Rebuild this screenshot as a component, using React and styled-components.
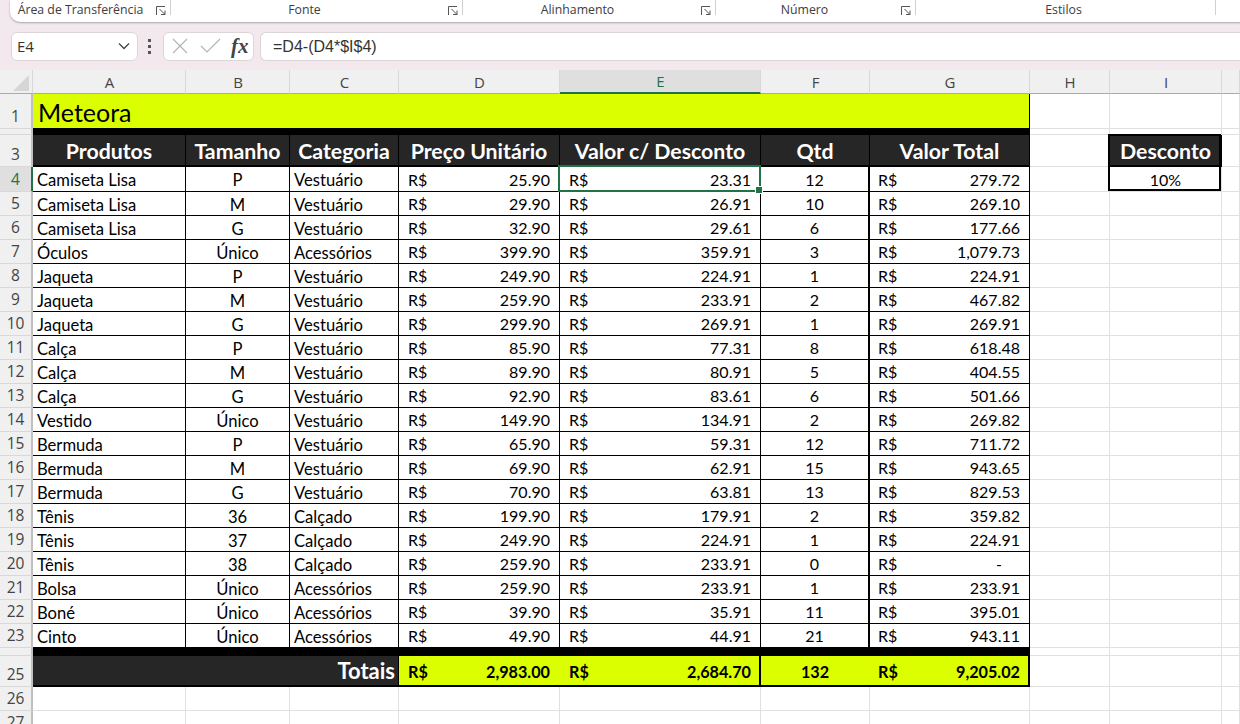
import styled, { createGlobalStyle } from "styled-components";

const COLUMNS = "33px 153px 104px 109px 161px 201px 109px 160px 80px 112px 1fr";
const LETTERS = ["A", "B", "C", "D", "E", "F", "G", "H", "I"];

const PRODUCTS = [
  [4, "Camiseta Lisa", "P", "Vestuário", "25.90", "23.31", "12", "279.72"],
  [5, "Camiseta Lisa", "M", "Vestuário", "29.90", "26.91", "10", "269.10"],
  [6, "Camiseta Lisa", "G", "Vestuário", "32.90", "29.61", "6", "177.66"],
  [7, "Óculos", "Único", "Acessórios", "399.90", "359.91", "3", "1,079.73"],
  [8, "Jaqueta", "P", "Vestuário", "249.90", "224.91", "1", "224.91"],
  [9, "Jaqueta", "M", "Vestuário", "259.90", "233.91", "2", "467.82"],
  [10, "Jaqueta", "G", "Vestuário", "299.90", "269.91", "1", "269.91"],
  [11, "Calça", "P", "Vestuário", "85.90", "77.31", "8", "618.48"],
  [12, "Calça", "M", "Vestuário", "89.90", "80.91", "5", "404.55"],
  [13, "Calça", "G", "Vestuário", "92.90", "83.61", "6", "501.66"],
  [14, "Vestido", "Único", "Vestuário", "149.90", "134.91", "2", "269.82"],
  [15, "Bermuda", "P", "Vestuário", "65.90", "59.31", "12", "711.72"],
  [16, "Bermuda", "M", "Vestuário", "69.90", "62.91", "15", "943.65"],
  [17, "Bermuda", "G", "Vestuário", "70.90", "63.81", "13", "829.53"],
  [18, "Tênis", "36", "Calçado", "199.90", "179.91", "2", "359.82"],
  [19, "Tênis", "37", "Calçado", "249.90", "224.91", "1", "224.91"],
  [20, "Tênis", "38", "Calçado", "259.90", "233.91", "0", "-"],
  [21, "Bolsa", "Único", "Acessórios", "259.90", "233.91", "1", "233.91"],
  [22, "Boné", "Único", "Acessórios", "39.90", "35.91", "11", "395.01"],
  [23, "Cinto", "Único", "Acessórios", "49.90", "44.91", "21", "943.11"],
];

const GROUPS = [
  { name: "Área de Transferência", width: 161, shift: 19, launcher: true },
  { name: "Fonte", width: 292, shift: 24, launcher: true },
  { name: "Alinhamento", width: 253, shift: 23, launcher: true },
  { name: "Número", width: 200, shift: 22, launcher: true },
  { name: "Estilos", width: 300, shift: 4 },
];

const Launcher = () => (
  <LauncherIcon viewBox="0 0 10 9">
    <path d="M.5 9V.5H9M3.5 3l5.5 5.5M9 4.5v4H5" fill="none" stroke="#555" />
  </LauncherIcon>
);

const Blank = ({ count = 1 }) =>
  Array.from({ length: count }, (_, i) => <GridCell key={i} />);

const Money = ({ value, $tight }) => (
  <MoneyCell $tight={$tight}>
    <span>R$</span>
    <span>{value}</span>
  </MoneyCell>
);

const App = () => {
  return (
    <Page>
      <GlobalStyle />
      <Ribbon>
        {GROUPS.map((group) => (
          <RibbonGroup key={group.name} $width={group.width} $shift={group.shift}>
            {group.name}
            {group.launcher && <Launcher />}
          </RibbonGroup>
        ))}
      </Ribbon>

      <FormulaBar>
        <NameBox>
          E4
          <svg width="12" height="8" viewBox="0 0 12 8">
            <path d="M1 1.5l5 5 5-5" fill="none" stroke="#444" strokeWidth="1.3" />
          </svg>
        </NameBox>
        <Dots>
          <i />
          <i />
          <i />
        </Dots>
        <FormulaButtons>
          <svg width="16" height="16" viewBox="0 0 16 16">
            <path d="M1 1l14 14M15 1L1 15" stroke="#b4b4b4" strokeWidth="1.2" />
          </svg>
          <svg width="21" height="16" viewBox="0 0 21 16">
            <path d="M1 8l6 6L20 1" fill="none" stroke="#b4b4b4" strokeWidth="1.2" />
          </svg>
          <FxLabel>fx</FxLabel>
        </FormulaButtons>
        <FormulaInput>=D4-(D4*$I$4)</FormulaInput>
      </FormulaBar>

      <Row $height={24}>
        <Corner>
          <svg width="16" height="16" viewBox="0 0 16 16">
            <path d="M16 0v16H0z" fill="#d6d6d6" />
          </svg>
        </Corner>
        {LETTERS.map((letter) => (
          <ColumnLabel key={letter} $active={letter === "E"}>
            {letter}
          </ColumnLabel>
        ))}
        <ColumnLabel />
      </Row>

      <Row $height={35}>
        <RowLabel>1</RowLabel>
        <TitleCell>Meteora</TitleCell>
        <Blank count={3} />
      </Row>

      <Row $height={6}>
        <RowLabel />
        <BlackBand />
        <Blank count={3} />
      </Row>

      <Row $height={32}>
        <RowLabel>3</RowLabel>
        <HeadCell>Produtos</HeadCell>
        <HeadCell>Tamanho</HeadCell>
        <HeadCell>Categoria</HeadCell>
        <HeadCell>Preço Unitário</HeadCell>
        <HeadCell>Valor c/ Desconto</HeadCell>
        <HeadCell>Qtd</HeadCell>
        <HeadCell>Valor Total</HeadCell>
        <GridCell />
        <DiscountHead>Desconto</DiscountHead>
        <GridCell />
      </Row>

      {PRODUCTS.map(([n, name, size, category, price, discounted, qty, total]) => (
        <Row key={n} $height={n === 4 ? 25 : 24}>
          <RowLabel $active={n === 4}>{n}</RowLabel>
          <TextCell>{name}</TextCell>
          <TextCell $center>{size}</TextCell>
          <TextCell>{category}</TextCell>
          <Money value={price} />
          {n === 4 ? (
            <SelectedCell>
              <span>R$</span>
              <span>{discounted}</span>
            </SelectedCell>
          ) : (
            <Money value={discounted} />
          )}
          <QtyCell>{qty}</QtyCell>
          {total === "-" ? (
            <MoneyCell $tight>
              <span>R$</span>
              <Dash>-</Dash>
            </MoneyCell>
          ) : (
            <Money value={total} $tight />
          )}
          <GridCell />
          {n === 4 ? <DiscountValue>10%</DiscountValue> : <GridCell />}
          <GridCell />
        </Row>
      ))}

      <Row $height={8}>
        <RowLabel />
        <BlackBand />
        <Blank count={3} />
      </Row>

      <Row $height={31}>
        <RowLabel>25</RowLabel>
        <TotalsLabel>Totais</TotalsLabel>
        <TotalMoney>
          <span>R$</span>
          <span>2,983.00</span>
        </TotalMoney>
        <TotalMoney $thick>
          <span>R$</span>
          <span>2,684.70</span>
        </TotalMoney>
        <TotalQty>132</TotalQty>
        <TotalMoney $last>
          <span>R$</span>
          <span>9,205.02</span>
        </TotalMoney>
        <Blank count={3} />
      </Row>

      {[26, 27].map((n) => (
        <Row key={n} $height={24}>
          <RowLabel>{n}</RowLabel>
          <Blank count={10} />
        </Row>
      ))}
    </Page>
  );
};

export default App;

const GlobalStyle = createGlobalStyle`
  html, body {
    margin: 0;
    padding: 0;
    background: #f3e8ed;
  }
  * {
    box-sizing: border-box;
  }
`;

const Page = styled.div`
  width: 1240px;
  height: 724px;
  overflow: hidden;
  background: #f3e8ed;
  font-family: "Lato", "Liberation Sans", sans-serif;
`;

const Ribbon = styled.div`
  display: flex;
  width: 1260px;
  height: 22px;
  margin-left: 10px;
  background: #fff;
  border-radius: 0 0 0 10px;
  box-shadow: 0 1px 2px rgba(0, 0, 0, 0.3);
  font-family: "Open Sans", sans-serif;
  font-size: 12.3px;
  color: #3d3d3d;
`;

const RibbonGroup = styled.div`
  position: relative;
  flex: none;
  display: flex;
  justify-content: center;
  width: ${({ $width }) => $width}px;
  height: 15px;
  padding-right: ${({ $shift }) => $shift}px;
  padding-top: 2px;
  line-height: 16px;
  white-space: nowrap;
  border-right: 1px solid #d0d0d0;
`;

const LauncherIcon = styled.svg`
  position: absolute;
  right: 4px;
  top: 6px;
  width: 10px;
  height: 9px;
`;

const FormulaBar = styled.div`
  display: flex;
  align-items: center;
  height: 48px;
  padding: 0 0 0 11px;
`;

const NameBox = styled.div`
  display: flex;
  align-items: center;
  justify-content: space-between;
  width: 127px;
  height: 29px;
  padding: 0 7px 0 5px;
  background: #fff;
  border: 1px solid #dcd6d9;
  border-radius: 6px;
  font-family: "Open Sans", sans-serif;
  font-size: 15px;
  color: #333;
`;

const Dots = styled.div`
  display: flex;
  flex-direction: column;
  gap: 3px;
  margin: 0 12px 0 10px;

  i {
    display: block;
    width: 3px;
    height: 3px;
    background: #555;
  }
`;

const FormulaButtons = styled.div`
  display: flex;
  flex: none;
  align-items: center;
  width: 91px;
  height: 29px;
  padding-left: 8px;
  gap: 12px;
  background: #fff;
  border: 1px solid #dcd6d9;
  border-radius: 6px;

  svg {
    flex: none;
  }
`;

const FxLabel = styled.span`
  margin-left: -2px;
  font-family: "Liberation Serif", serif;
  font-style: italic;
  font-weight: 700;
  font-size: 21px;
  line-height: 1;
  color: #444;
`;

const FormulaInput = styled.div`
  flex: 1;
  height: 29px;
  margin-left: 6px;
  padding-left: 12px;
  background: #fff;
  border: 1px solid #dcd6d9;
  border-right: 0;
  border-radius: 6px 0 0 6px;
  font-family: "Liberation Sans", sans-serif;
  font-size: 16px;
  line-height: 27px;
  color: #333;
`;

const Row = styled.div`
  display: grid;
  grid-template-columns: ${COLUMNS};
  height: ${({ $height }) => $height}px;
`;

const Corner = styled.div`
  display: flex;
  justify-content: flex-end;
  padding: 5px 3px 0 0;
  background: #f0f0f0;
  border-right: 1px solid #d8d8d8;
  border-bottom: 1px solid #ababab;
`;

const ColumnLabel = styled.div`
  display: flex;
  align-items: center;
  justify-content: center;
  padding-left: 1px;
  background: ${({ $active }) => ($active ? "#dfdfdf" : "#f0f0f0")};
  border-right: 1px solid #d8d8d8;
  border-bottom: ${({ $active }) =>
    $active ? "2px solid #217346" : "1px solid #ababab"};
  font-family: "Open Sans", sans-serif;
  font-size: 15px;
  color: ${({ $active }) => ($active ? "#217346" : "#444")};
`;

const RowLabel = styled.div`
  display: flex;
  align-items: flex-end;
  justify-content: center;
  padding-bottom: 1px;
  background: ${({ $active }) => ($active ? "#dfdfdf" : "#f0f0f0")};
  border-right: 2px solid ${({ $active }) => ($active ? "#217346" : "#c0c0c0")};
  border-bottom: 1px solid #d8d8d8;
  font-family: "Open Sans", sans-serif;
  font-size: 15.5px;
  line-height: 22px;
  overflow: hidden;
  color: ${({ $active }) => ($active ? "#217346" : "#444")};
`;

const GridCell = styled.div`
  background: #fff;
  border-right: 1px solid #e0e0e0;
  border-bottom: 1px solid #e0e0e0;
`;

const TitleCell = styled.div`
  grid-column: span 7;
  display: flex;
  align-items: center;
  padding: 2px 0 0 5px;
  background: #dcff00;
  border-bottom: 1px solid #000;
  border-right: 1px solid #000;
  font-size: 25px;
  color: #000;
`;

const BlackBand = styled.div`
  grid-column: span 7;
  background: #000;
`;

const HeadCell = styled.div`
  position: relative;
  display: flex;
  align-items: center;
  justify-content: center;
  padding-top: 2px;
  background: #262626;
  border-right: 1px solid #000;
  border-bottom: 2px solid #000;
  font-size: 21.3px;
  font-weight: 700;
  color: #fff;
  white-space: nowrap;
`;

const DiscountHead = styled(HeadCell)`
  &::after {
    content: "";
    position: absolute;
    top: -1px;
    left: -2px;
    right: 0;
    bottom: -2px;
    border: solid #000;
    border-width: 2px 2px 0 2px;
  }
`;

const TextCell = styled.div`
  display: flex;
  align-items: center;
  justify-content: ${({ $center }) => ($center ? "center" : "flex-start")};
  padding: 2px 4px 0;
  background: #fff;
  border-right: 1px solid #000;
  border-bottom: 1px solid #000;
  font-size: 16.6px;
  color: #000;
`;

const QtyCell = styled(TextCell)`
  justify-content: center;
  padding: 0 4px;
  border-right-width: 2px;
  font-size: 16px;
`;

const DiscountValue = styled(TextCell)`
  position: relative;
  justify-content: center;
  padding: 0 4px;
  border-right: 1px solid #e0e0e0;
  border-bottom: 1px solid #e0e0e0;
  font-size: 16px;

  &::after {
    content: "";
    position: absolute;
    top: 0;
    left: -2px;
    right: 0;
    bottom: 0;
    border: solid #000;
    border-width: 0 2px 2px 2px;
  }
`;

const MoneyCell = styled(TextCell)`
  justify-content: space-between;
  padding: 0 9px 0 ${({ $tight }) => ($tight ? "8px" : "9px")};
  font-size: 16px;
`;

const Dash = styled.span`
  margin-right: 18px;
`;

const SelectedCell = styled(MoneyCell)`
  position: relative;
  z-index: 2;

  &::before {
    content: "";
    position: absolute;
    top: -2px;
    left: -2px;
    right: -1px;
    bottom: -1px;
    border: 2px solid #217346;
  }

  &::after {
    content: "";
    position: absolute;
    right: -3px;
    bottom: -3px;
    width: 6px;
    height: 6px;
    background: #217346;
    border: 1px solid #fff;
  }
`;

const TotalsLabel = styled.div`
  grid-column: span 3;
  display: flex;
  align-items: center;
  justify-content: flex-end;
  padding: 0 3px 0 0;
  background: #262626;
  border-bottom: 2px solid #000;
  border-right: 1px solid #000;
  font-size: 22px;
  font-weight: 700;
  color: #fff;
`;

const TotalMoney = styled.div`
  display: flex;
  align-items: center;
  justify-content: space-between;
  padding: 2px ${({ $thick, $last }) => ($last ? "8px" : $thick ? "8px" : "10px")} 0
    ${({ $last }) => ($last ? "8px" : "9px")};
  background: #dcff00;
  border-bottom: 2px solid #000;
  border-right: ${({ $thick, $last }) => ($thick || $last ? "2px solid #000" : "0")};
  font-size: 16.2px;
  font-weight: 700;
  color: #000;
`;

const TotalQty = styled(TotalMoney)`
  justify-content: center;
`;
